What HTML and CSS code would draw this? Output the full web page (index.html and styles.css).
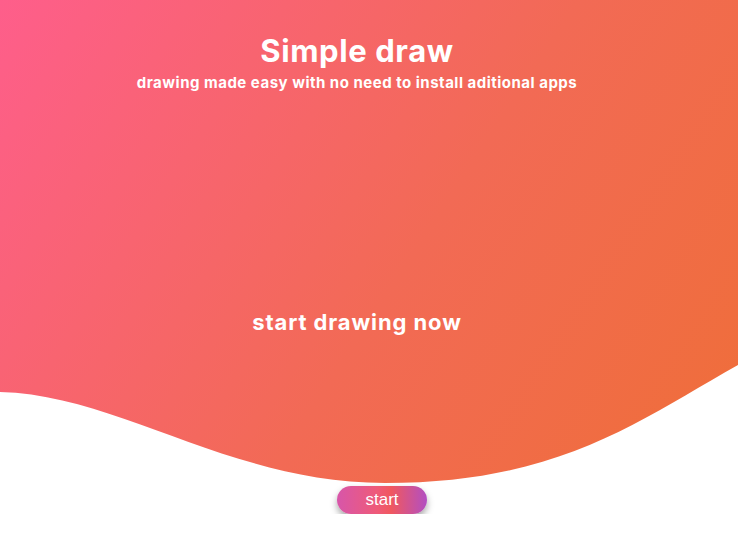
FILE: index.html
```html
<!DOCTYPE html>
<html lang="en">
<head>
<meta charset="utf-8">
<title>Simple draw</title>
<link rel="stylesheet" href="styles.css">
</head>
<body>
<header class="hero">
  <svg class="wave" width="738" height="484" viewBox="0 0 738 484" preserveAspectRatio="none" aria-hidden="true">
    <defs>
      <linearGradient id="heroGrad" x1="0" y1="0" x2="738" y2="484" gradientUnits="userSpaceOnUse">
        <stop offset="0" stop-color="#fe5e8b"/>
        <stop offset="0.55" stop-color="#f26a55"/>
        <stop offset="1" stop-color="#ef6e38"/>
      </linearGradient>
    </defs>
    <path d="M0 0 H738 V365 C640 420 560 483 385 483 C230 483 120 395 0 392 Z" fill="url(#heroGrad)"/>
  </svg>
  <div class="hero-text">
    <h1 class="title">Simple draw</h1>
    <p class="subtitle">drawing made easy with no need to install aditional apps</p>
  </div>
  <h2 class="cta-text">start drawing now</h2>
</header>
<div class="actions">
  <button class="start-btn" type="button">start</button>
</div>
</body>
</html>
```

FILE: styles.css
```css
* { box-sizing: border-box; }
html, body { margin: 0; padding: 0; background: #ffffff; }
body {
  font-family: "Inter", "Noto Sans", sans-serif;
  color: #ffffff;
  overflow: hidden;
}
.hero {
  position: relative;
  height: 484px;
  display: flex;
  flex-direction: column;
  align-items: center;
  padding: 33px 24px 0 0;
}
.wave {
  position: absolute;
  left: 0;
  top: 0;
  z-index: 0;
}
.hero-text, .cta-text { position: relative; z-index: 1; }
.hero-text {
  display: flex;
  flex-direction: column;
  align-items: center;
}
.title {
  margin: 0;
  font-size: 31px;
  font-weight: 700;
  letter-spacing: 0.6px;
  line-height: 36px;
}
.subtitle {
  margin: 5px 0 0;
  font-size: 15px;
  font-weight: 700;
  letter-spacing: 0.5px;
  line-height: 18px;
}
.cta-text {
  margin: 217px 0 0;
  font-size: 22px;
  font-weight: 700;
  letter-spacing: 0.9px;
  line-height: 26px;
}
.actions {
  display: flex;
  justify-content: center;
  padding-left: 26px;
  margin-top: 2px;
}
.start-btn {
  width: 90px;
  height: 28px;
  border: none;
  border-radius: 14px;
  background: linear-gradient(90deg, #d756aa 0%, #ef5a78 45%, #f0585f 60%, #b24fc2 100%);
  color: #ffffff;
  font-family: "Liberation Sans", Arial, sans-serif;
  font-size: 17px;
  line-height: 28px;
  padding: 0;
  box-shadow: 0 4px 7px rgba(0, 0, 0, 0.35);
}
```
